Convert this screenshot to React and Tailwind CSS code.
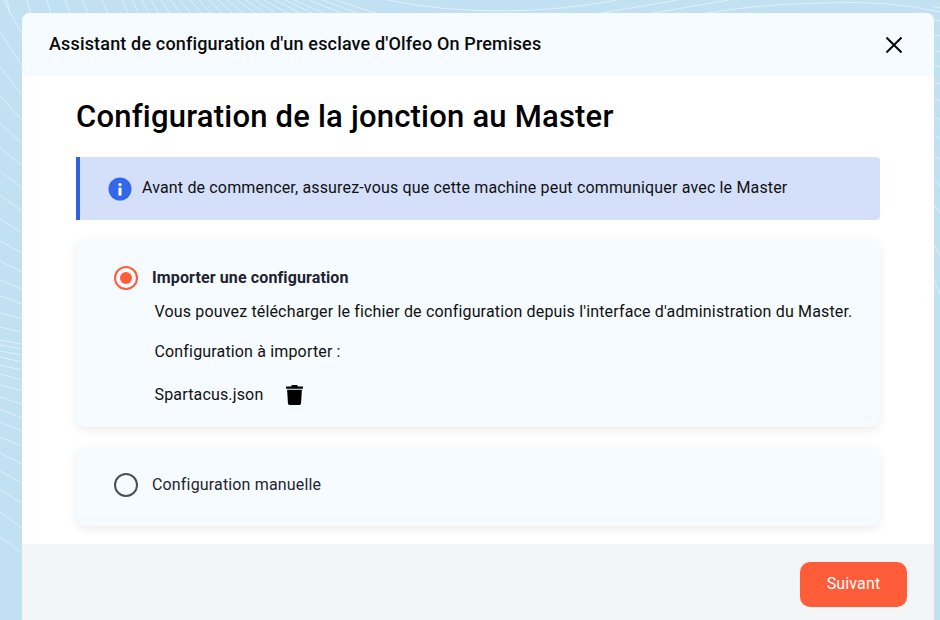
import React from "react";

const leftLines = [
  [32, 66], [67, 95], [96, 120], [123, 143], [147, 166], [171, 188], [195, 211], [219, 233], [241, 253], [261, 272],
  [280, 289], [296, 304], [313, 319], [327, 332], [340, 344], [345, 349], [351, 355], [357, 362], [365, 370], [374, 380],
  [385, 391], [397, 404], [409, 418], [422, 431], [437, 446], [453, 464], [471, 483], [490, 503], [512, 528], [537, 553],
];
const rightLines = [
  [7, 8], [20, 21], [35, 36], [50, 52], [65, 67], [82, 84], [98, 101], [117, 120], [135, 139], [155, 160], [180, 186], [205, 213], [245, 256], [280, 295],
];
const topLines = [
  [7, 10], [27, 31], [47, 51], [65, 70], [83, 88], [102, 108], [122, 128], [132, 139], [142, 149], [151, 159], [161, 170],
  [171, 181], [180, 191], [190, 202], [199, 212], [209, 223], [218, 233], [227, 244], [237, 256], [246, 266], [255, 277],
  [264, 289], [275, 302], [285, 314], [294, 326], [309, 344], [322, 360], [336, 378],
];

function Waves() {
  return (
    <svg className="absolute inset-0 h-full w-full" viewBox="0 0 940 620" fill="none" stroke="#ffffff" strokeOpacity="0.5" strokeWidth="1">
      <path d="M4 0 Q 12 18 22 33" />
      {leftLines.map(([a, b]) => (
        <path key={"l" + a} d={`M0 ${a} L22 ${b}`} />
      ))}
      {topLines.map(([a, b]) => (
        <path key={"t" + a} d={`M${a} 0 L${b} 14`} />
      ))}
      {rightLines.map(([a, b]) => (
        <path key={"r" + a} d={`M934 ${a} L940 ${b}`} />
      ))}
      <path d="M387 0 Q 498 22 618 0" />
      <path d="M596 14 L678 0" />
      <path d="M647 14 L729 0" />
      <path d="M700 14 Q 760 4 820 3 Q 890 0 940 12" />
    </svg>
  );
}

function Close() {
  return (
    <svg width="16" height="16" viewBox="0 0 16 16" fill="none" stroke="#000" strokeWidth="2" strokeLinecap="square">
      <path d="M1.2 1.2 14.8 14.8M14.8 1.2 1.2 14.8" />
    </svg>
  );
}

function Info() {
  return (
    <svg width="24" height="24" viewBox="0 0 24 24">
      <circle cx="12" cy="12" r="11.5" fill="#3468ea" />
      <circle cx="12" cy="7.6" r="1.7" fill="#fff" />
      <rect x="10.5" y="10.6" width="3" height="8" fill="#fff" />
    </svg>
  );
}

function Trash() {
  return (
    <svg width="17" height="20" viewBox="0 0 16 19" fill="#000" className="block">
      <path d="M5.5 0h5l.8 1.4H16v2.2H0V1.4h4.7z" />
      <path d="M1 4.6h14l-.8 13c-.1.8-.7 1.4-1.5 1.4H3.3c-.8 0-1.4-.6-1.5-1.4z" />
    </svg>
  );
}

export default function App() {
  return (
    <div className="relative h-[620px] w-[940px] overflow-hidden bg-[#c1e0f1] font-['Roboto',sans-serif] tracking-[0.01em]">
      <Waves />
      <div className="relative ml-[22px] mt-[13px] flex h-[607px] w-[912px] flex-col overflow-hidden rounded-t-[8px] bg-white">
        <header className="flex h-[63px] shrink-0 items-center justify-between bg-[#f5fbff] pl-[27px] pr-[32px]">
          <h2 className="pb-[2px] text-[18px] font-medium text-[#0a0a0a]">Assistant de configuration d'un esclave d'Olfeo On Premises</h2>
          <Close />
        </header>
        <main className="flex flex-1 flex-col px-[54px]">
          <h1 className="mt-[20px] h-[41px] text-[31px] font-medium leading-[41px] tracking-[0.21px] text-black">Configuration de la jonction au Master</h1>
          <div className="mt-[20px] flex h-[63px] items-center rounded-r-[4px] border-l-[4px] border-[#3060e0] bg-[#d4dffa] pl-[28px]">
            <Info />
            <span className="ml-[10px] pb-[1px] text-[16px] text-[#111]">Avant de commencer, assurez-vous que cette machine peut communiquer avec le Master</span>
          </div>
          <section className="mt-[19px] h-[188px] rounded-[10px] bg-[#f5fbff] pl-[38px] pt-[27px] shadow-[0_3px_10px_rgba(0,0,0,0.08)]">
            <div className="flex h-[24px] items-center">
              <span className="flex h-[24px] w-[24px] items-center justify-center rounded-full border-2 border-[#ff5c39]">
                <span className="h-[12px] w-[12px] rounded-full bg-[#ff5c39]" />
              </span>
              <span className="ml-[14px] text-[16px] font-bold tracking-[0.12px] text-[#1f2430]">Importer une configuration</span>
            </div>
            <div className="ml-[40.5px] text-[16px] text-[#111]">
              <p className="mt-[10px] leading-[24px]">Vous pouvez télécharger le fichier de configuration depuis l'interface d'administration du Master.</p>
              <p className="mt-[16px] leading-[24px]">Configuration à importer :</p>
              <div className="mt-[18px] flex h-[26px] items-center">
                <span>Spartacus.json</span>
                <span className="ml-[23px]"><Trash /></span>
              </div>
            </div>
          </section>
          <section className="mt-[20px] flex h-[79px] items-center rounded-[10px] bg-[#f5fbff] pb-[3px] pl-[38px] shadow-[0_3px_10px_rgba(0,0,0,0.08)]">
            <span className="h-[24px] w-[24px] rounded-full border-2 border-[#4b5058]" />
            <span className="ml-[14px] text-[16px] text-[#1f2430]">Configuration manuelle</span>
          </section>
        </main>
        <footer className="flex h-[76px] shrink-0 items-start justify-end bg-[#f4f5f7] pr-[27px] pt-[18px]">
          <button className="h-[45px] w-[107px] rounded-[10px] bg-[#ff5c39] pb-[2px] text-[16px] text-white">Suivant</button>
        </footer>
      </div>
    </div>
  );
}
